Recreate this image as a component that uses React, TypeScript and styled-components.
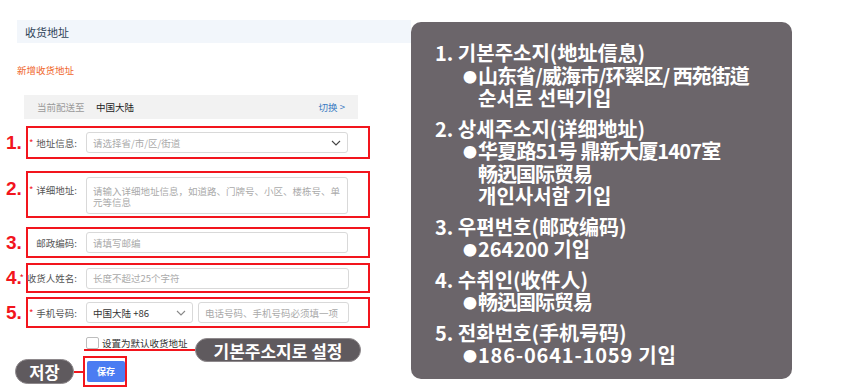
import React from "react";
import styled, { createGlobalStyle, css } from "styled-components";

const RED = "#f2151d";
const DARK = "#5f5a5e";

const Global = createGlobalStyle`
  html, body { margin: 0; padding: 0; background: #fff; }
  body { font-family: "Noto Sans CJK SC", "Noto Sans", sans-serif; }
`;

const Page = styled.div`
  display: flex;
  width: 850px;
  height: 392px;
  overflow: hidden;
  background: #fff;
`;

const LeftCol = styled.div`
  width: 411px;
  flex: none;
  display: flex;
  flex-direction: column;
`;

const HeaderBar = styled.div`
  margin: 20px 0 0 17px;
  height: 23px;
  background: #f2f6fb;
  display: flex;
  align-items: center;
  padding-left: 8px;
  font-size: 11px;
  color: #2f4358;
`;

const NewAddr = styled.div`
  margin: 20px 0 0 17px;
  height: 14px;
  line-height: 14px;
  font-size: 9.5px;
  color: #f0672c;
`;

const DeliveryBar = styled.div`
  margin: 18px 0 0 24px;
  width: 334px;
  height: 24px;
  box-sizing: border-box;
  padding: 0 13px;
  background: #f2f2f2;
  display: flex;
  align-items: center;
  font-size: 9.5px;
`;

const Muted = styled.span`
  color: #9a9a9a;
  width: 59px;
`;

const Region = styled.span`
  color: #222;
  flex: 1;
`;

const SwitchLink = styled.span`
  color: #3b7bc2;
`;

const FieldRow = styled.div<{ $mt: number }>`
  display: flex;
  align-items: center;
  margin-top: ${(p) => p.$mt}px;
`;

const Num = styled.div<{ $top?: boolean }>`
  width: 26px;
  flex: none;
  box-sizing: border-box;
  padding-left: 6px;
  font-family: "Liberation Sans", Arial, sans-serif;
  font-weight: 700;
  font-size: 19px;
  line-height: 20px;
  color: ${RED};
  ${(p) =>
    p.$top &&
    css`
      align-self: flex-start;
      margin-top: 8px;
    `}
`;

const Box = styled.div<{ $h: number; $top?: boolean }>`
  width: 344px;
  height: ${(p) => p.$h}px;
  box-sizing: border-box;
  border: 2px solid ${RED};
  display: flex;
  align-items: ${(p) => (p.$top ? "flex-start" : "center")};
  padding-top: ${(p) => (p.$top ? 4 : 0)}px;
`;

const Label = styled.div<{ $top?: boolean }>`
  width: 58px;
  flex: none;
  box-sizing: border-box;
  padding-right: 9px;
  display: flex;
  justify-content: flex-end;
  white-space: nowrap;
  font-size: 9.5px;
  line-height: 14px;
  color: #555;
  margin-top: ${(p) => (p.$top ? 6 : 0)}px;
`;

const Star = styled.span`
  color: ${RED};
  margin-right: 3px;
`;

const Field = styled.div<{ $w: number; $h?: number; $dark?: boolean; $area?: boolean }>`
  width: ${(p) => p.$w}px;
  height: ${(p) => p.$h ?? 21}px;
  flex: none;
  box-sizing: border-box;
  border: 1px solid #d9d9d9;
  border-radius: 3px;
  background: #fff;
  font-size: 9.5px;
  color: ${(p) => (p.$dark ? "#333" : "#aaa")};
  white-space: nowrap;
  ${(p) =>
    p.$area
      ? css`
          padding: 8px 6px 0 6px;
          line-height: 10.5px;
        `
      : css`
          padding: 0 6px;
          display: flex;
          align-items: center;
          justify-content: space-between;
        `}
`;

const FieldGap = styled.div`
  width: 5px;
  flex: none;
`;

const Chevron = ({ color = "#555" }: { color?: string }) => (
  <svg width="10" height="6" viewBox="0 0 10 6" fill="none">
    <polyline points="1,1 5,5 9,1" stroke={color} strokeWidth="1.1" />
  </svg>
);

const DefaultRow = styled.div`
  display: flex;
  align-items: flex-start;
  margin: 8px 0 0 84px;
  height: 15px;
`;

const CheckArea = styled.div`
  width: 109px;
  height: 13px;
  border-bottom: 2px solid ${RED};
  display: flex;
  align-items: center;
  padding-left: 2px;
  box-sizing: content-box;
  font-size: 9.5px;
  color: #333;
  white-space: nowrap;
`;

const CheckBox = styled.span`
  width: 13px;
  height: 12px;
  box-sizing: border-box;
  border: 1px solid #bdbdbd;
  border-radius: 2px;
  background: #fff;
  margin-right: 3px;
  flex: none;
`;

const Callout = styled.div<{ $w: number; $h: number; $fs: number }>`
  width: ${(p) => p.$w}px;
  height: ${(p) => p.$h}px;
  flex: none;
  box-sizing: border-box;
  border-radius: ${(p) => p.$h / 2}px;
  background: ${DARK};
  border: 1px solid #8e898c;
  color: #fff;
  font-family: "Noto Sans CJK KR", "Noto Sans", sans-serif;
  font-weight: 700;
  font-size: ${(p) => p.$fs}px;
  display: flex;
  align-items: center;
  justify-content: center;
  white-space: nowrap;
`;

const DefaultCallout = styled(Callout)`
  margin-top: 2px;
`;

const SaveRow = styled.div`
  display: flex;
  align-items: center;
  margin: 5px 0 0 15px;
`;

const Connector = styled.div`
  width: 9px;
  height: 2px;
  background: ${RED};
  flex: none;
`;

const SaveFrame = styled.div`
  border: 2px solid ${RED};
  padding: 3px 0 3px 2px;
  display: flex;
`;

const SaveBtn = styled.div`
  width: 38px;
  height: 21px;
  border-radius: 2px;
  background: #4b7cf2;
  color: #fff;
  font-size: 9px;
  font-weight: 700;
  display: flex;
  align-items: center;
  justify-content: center;
`;

const Panel = styled.div`
  margin-top: 22px;
  width: 381px;
  height: 357px;
  flex: none;
  box-sizing: border-box;
  border-radius: 10px;
  background: #6b656a;
  padding: 20px 0 0 24px;
  color: #fff;
  font-family: "Noto Sans CJK KR", "Noto Sans", sans-serif;
  font-weight: 700;
  font-size: 20px;
  line-height: 22.5px;
  display: flex;
  flex-direction: column;
  gap: 8px;
`;

const Group = styled.div`
  display: flex;
  flex-direction: column;
`;

const Title = styled.div`
  white-space: nowrap;
`;

const BulletLine = styled.div<{ $spacing: number }>`
  padding-left: 28px;
  white-space: nowrap;
  display: flex;
  align-items: center;
  letter-spacing: ${(p) => p.$spacing}px;
`;

const Dot = styled.span`
  width: 15px;
  flex: none;
  font-size: 14px;
  letter-spacing: 0;
`;

const Cont = styled.div<{ $spacing: number }>`
  padding-left: 43px;
  white-space: nowrap;
  letter-spacing: ${(p) => p.$spacing}px;
`;

type Line = { text: string; spacing: number };
type Note = { title: string; bullet: Line; more?: Line[] };

const notes: Note[] = [
  {
    title: "1. 기본주소지(地址信息)",
    bullet: { text: "山东省/威海市/环翠区/ 西苑街道", spacing: -1 },
    more: [{ text: "순서로 선택기입", spacing: 0 }],
  },
  {
    title: "2. 상세주소지(详细地址)",
    bullet: { text: "华夏路51号 鼎新大厦1407室", spacing: -0.8 },
    more: [
      { text: "畅迅国际贸易", spacing: -1 },
      { text: "개인사서함 기입", spacing: 0 },
    ],
  },
  { title: "3. 우편번호(邮政编码)", bullet: { text: "264200 기입", spacing: 0 } },
  { title: "4. 수취인(收件人)", bullet: { text: "畅迅国际贸易", spacing: -1 } },
  { title: "5. 전화번호(手机号码)", bullet: { text: "186-0641-1059 기입", spacing: 0.8 } },
];

export default function App() {
  return (
    <>
      <Global />
      <Page>
        <LeftCol>
          <HeaderBar>收货地址</HeaderBar>
          <NewAddr>新增收货地址</NewAddr>
          <DeliveryBar>
            <Muted>当前配送至</Muted>
            <Region>中国大陆</Region>
            <SwitchLink>切换 &gt;</SwitchLink>
          </DeliveryBar>

          <FieldRow $mt={7}>
            <Num>1.</Num>
            <Box $h={33}>
              <Label>
                <Star>*</Star>地址信息:
              </Label>
              <Field $w={262}>
                <span>请选择省/市/区/街道</span>
                <Chevron color="#444" />
              </Field>
            </Box>
          </FieldRow>

          <FieldRow $mt={12}>
            <Num $top>2.</Num>
            <Box $h={47} $top>
              <Label $top>
                <Star>*</Star>详细地址:
              </Label>
              <Field $w={262} $h={37} $area>
                请输入详细地址信息，如道路、门牌号、小区、楼栋号、单
                <br />
                元等信息
              </Field>
            </Box>
          </FieldRow>

          <FieldRow $mt={9}>
            <Num>3.</Num>
            <Box $h={31}>
              <Label>邮政编码:</Label>
              <Field $w={262}>请填写邮编</Field>
            </Box>
          </FieldRow>

          <FieldRow $mt={5}>
            <Num>4.</Num>
            <Box $h={30}>
              <Label>
                <Star>*</Star>收货人姓名:
              </Label>
              <Field $w={263}>长度不超过25个字符</Field>
            </Box>
          </FieldRow>

          <FieldRow $mt={4}>
            <Num>5.</Num>
            <Box $h={31}>
              <Label>
                <Star>*</Star>手机号码:
              </Label>
              <Field $w={107} $dark>
                <span>中国大陆 +86</span>
                <Chevron color="#888" />
              </Field>
              <FieldGap />
              <Field $w={151}>电话号码、手机号码必须填一项</Field>
            </Box>
          </FieldRow>

          <DefaultRow>
            <CheckArea>
              <CheckBox />
              设置为默认收货地址
            </CheckArea>
            <DefaultCallout $w={166} $h={24} $fs={17}>
              기본주소지로 설정
            </DefaultCallout>
          </DefaultRow>

          <SaveRow>
            <Callout $w={59} $h={25} $fs={16.5}>
              저장
            </Callout>
            <Connector />
            <SaveFrame>
              <SaveBtn>保存</SaveBtn>
            </SaveFrame>
          </SaveRow>
        </LeftCol>

        <Panel>
          {notes.map((n) => (
            <Group key={n.title}>
              <Title>{n.title}</Title>
              <BulletLine $spacing={n.bullet.spacing}>
                <Dot>●</Dot>
                {n.bullet.text}
              </BulletLine>
              {n.more?.map((m) => (
                <Cont key={m.text} $spacing={m.spacing}>
                  {m.text}
                </Cont>
              ))}
            </Group>
          ))}
        </Panel>
      </Page>
    </>
  );
}
